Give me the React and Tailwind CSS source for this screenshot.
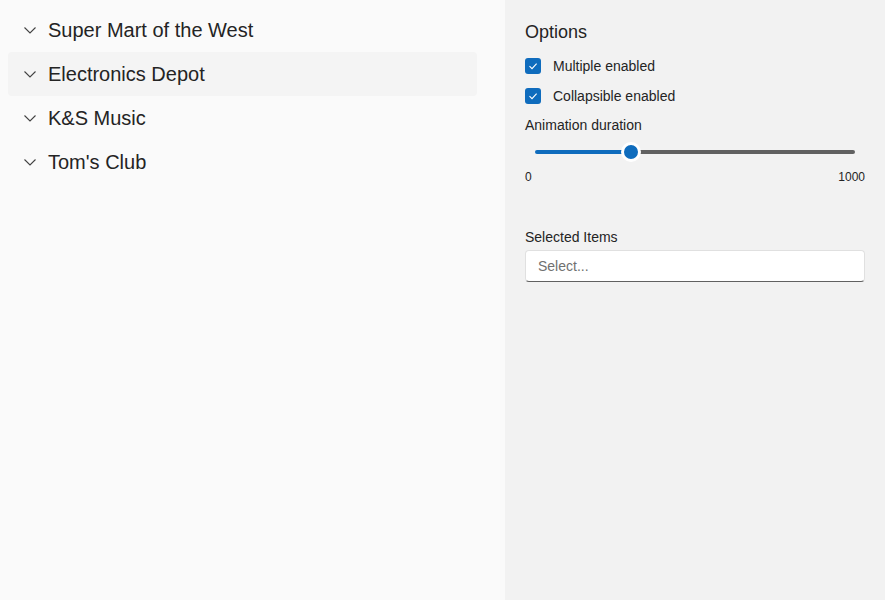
const items = ["Super Mart of the West", "Electronics Depot", "K&S Music", "Tom's Club"];

function Chevron() {
  return (
    <svg width="12" height="8" viewBox="0 0 12 8" fill="none">
      <path d="M0.5 1.5 L6 7 L11.5 1.5" stroke="#424242" strokeWidth="1.1" />
    </svg>
  );
}

function Checkbox({ label }) {
  return (
    <div className="flex items-center h-[30px]">
      <span className="w-4 h-4 rounded-[3px] bg-[#0f6cbd] flex items-center justify-center">
        <svg width="12" height="12" viewBox="0 0 12 12" fill="none">
          <path d="M2.5 6.2 L5 8.6 L9.6 3.6" stroke="white" strokeWidth="1.1" />
        </svg>
      </span>
      <span className="ml-3 text-[14px] text-[#242424]">{label}</span>
    </div>
  );
}

export default function App() {
  return (
    <div
      className="flex w-[885px] h-[600px] text-[#242424]"
      style={{ fontFamily: "'Liberation Sans', Arial, sans-serif" }}
    >
      {/* accordion list */}
      <div className="w-[505px] bg-[#fafafa] pt-2 pl-2 pr-7">
        {items.map((name, i) => (
          <div
            key={name}
            className={`flex items-center h-11 pl-4 rounded ${i === 1 ? "bg-[#f4f4f4]" : ""}`}
          >
            <Chevron />
            <span className="ml-3 text-[20px]">{name}</span>
          </div>
        ))}
      </div>

      {/* options panel */}
      <div className="flex-1 bg-[#f2f2f2] px-5 pt-[19px]">
        <h2 className="text-[18px] leading-[26px] mb-[6px]">Options</h2>
        <Checkbox label="Multiple enabled" />
        <Checkbox label="Collapsible enabled" />
        <div className="text-[14px] mt-[4px] leading-5">Animation duration</div>

        <div className="relative h-8 mx-[10px] mt-[1px]">
          <div className="absolute left-[100px] right-0 top-[14px] h-1 rounded-full bg-[#616161]" />
          <div className="absolute left-0 w-[90px] top-[14px] h-1 rounded-full bg-[#0f6cbd]" />
          <div className="absolute left-[86px] top-[6px] w-5 h-5 rounded-full bg-[#0f6cbd] border-[3px] border-white" />
        </div>
        <div className="flex justify-between text-[12px] leading-4 mt-[1px]">
          <span>0</span>
          <span>1000</span>
        </div>

        <div className="text-[14px] leading-5 mt-[42px]">Selected Items</div>
        <div className="mt-[3px] h-8 bg-white rounded border border-[#e0e0e0] border-b-[#616161] flex items-center px-3 text-[14px] text-[#707070]">
          Select...
        </div>
      </div>
    </div>
  );
}
